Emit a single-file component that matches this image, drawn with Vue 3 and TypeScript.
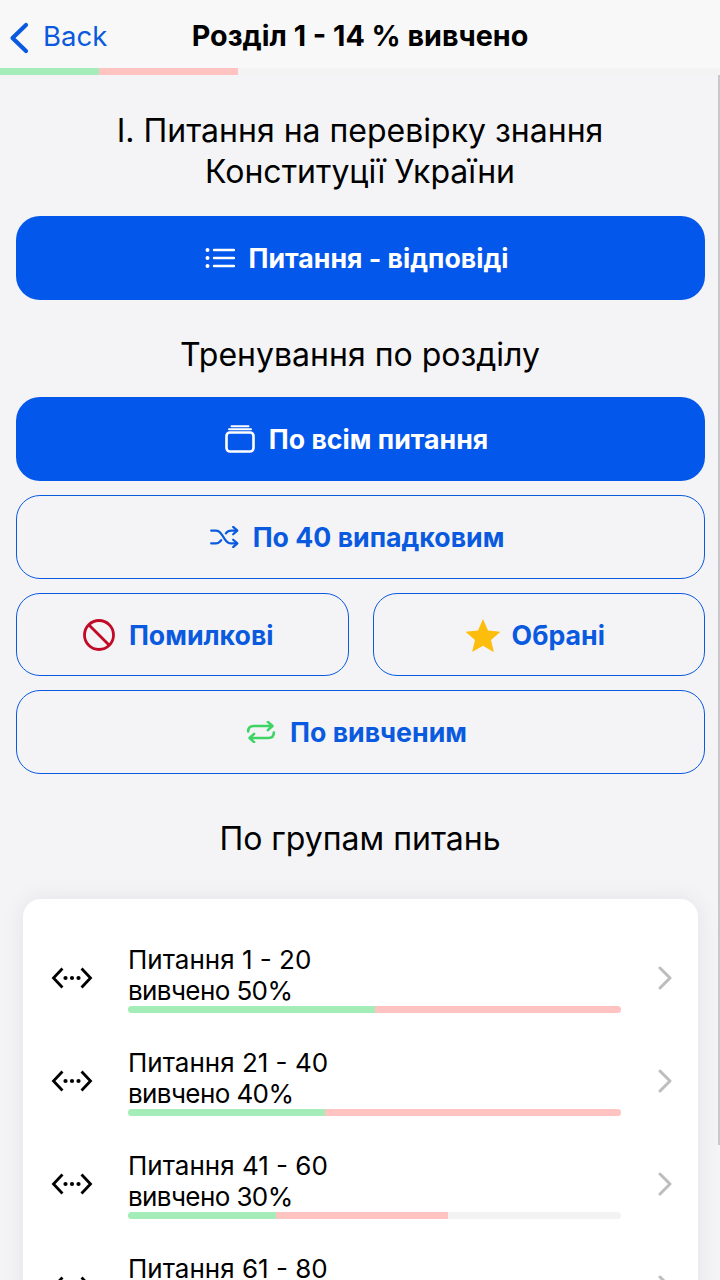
<script setup lang="ts">
interface Group { title: string; label: string; green: number; pink: number }
const groups: Group[] = [
  { title: 'Питання 1 - 20', label: 'вивчено 50%', green: 50, pink: 50 },
  { title: 'Питання 21 - 40', label: 'вивчено 40%', green: 40, pink: 60 },
  { title: 'Питання 41 - 60', label: 'вивчено 30%', green: 30, pink: 35 },
  { title: 'Питання 61 - 80', label: 'вивчено 20%', green: 20, pink: 30 },
]
</script>

<template>
  <div class="screen">
    <header class="nav">
      <div class="back">
        <svg class="back-icon" width="26" height="34" viewBox="0 0 26 34" fill="none"><path d="M20 4 L6.500 17 L20 30" stroke="#0a5ae0" stroke-width="4.200" stroke-linecap="round" stroke-linejoin="round" /></svg>
        <span>Back</span>
      </div>
      <div class="nav-title">Розділ 1 - 14 % вивчено</div>
    </header>
    <div class="top-progress">
      <div class="seg green top-g"></div>
      <div class="seg pink top-p"></div>
    </div>
    <main class="content">
      <h1 class="heading first">І. Питання на перевірку знання<br />Конституції України</h1>
      <button class="btn solid q-btn">
        <svg width="30" height="24" viewBox="0 0 30 24" fill="none" stroke="#fff" stroke-width="2.400" stroke-linecap="round"><path d="M9 4H29M9 12H29M9 20H29" /><circle cx="2.500" cy="4" r="2" fill="#fff" stroke="none" /><circle cx="2.500" cy="12" r="2" fill="#fff" stroke="none" /><circle cx="2.500" cy="20" r="2" fill="#fff" stroke="none" /></svg>
        <span>Питання - відповіді</span>
      </button>
      <h2 class="heading train">Тренування по розділу</h2>
      <div class="stack">
        <button class="btn solid">
          <svg width="30" height="28" viewBox="0 0 30 28" fill="none" stroke="#fff" stroke-linecap="round"><rect x="1.500" y="7.500" width="27" height="19" rx="3.500" stroke-width="2.600" /><path d="M4 4.200H26" stroke-width="2" /><path d="M6.500 1.200H23.500" stroke-width="2" /></svg>
          <span>По всім питання</span>
        </button>
        <button class="btn outline">
          <svg width="30" height="22" viewBox="0 0 32 24" fill="none" stroke="#0a5ae0" stroke-width="2.400" stroke-linecap="round" stroke-linejoin="round"><path d="M2 5h5c3.500 0 5 1.500 7 5l3 4.500c2 3 3.500 4.500 7 4.500h6" /><path d="M2 19h5c3 0 4.500-1.200 6-3.500M18 8c1.500-2 3-3 6-3h6" /><path d="M26 1l4.500 4L26 9M26 15l4.500 4-4.500 4" /></svg>
          <span>По 40 випадковим</span>
        </button>
        <div class="pair">
          <button class="btn outline">
            <svg width="32" height="32" viewBox="0 0 32 32" fill="none" stroke="#c00a26" stroke-width="2.800"><circle cx="16" cy="16" r="14.500" /><path d="M6 6L26 26" /></svg>
            <span>Помилкові</span>
          </button>
          <button class="btn outline star-btn">
            <svg width="36" height="34" viewBox="0 0 36 34"><path d="M18 1l5 11.500 12.500 1.200-9.500 8.300 2.900 12.200L18 27.800 7.100 34 10 21.900.5 13.700 13 12.500z" fill="#fdbd0c" /></svg>
            <span>Обрані</span>
          </button>
        </div>
        <button class="btn outline">
          <svg width="30" height="22" viewBox="0 0 32 24" fill="none" stroke="#3dd463" stroke-width="2.800" stroke-linecap="round" stroke-linejoin="round"><path d="M2 11.500C2 7.500 4.500 5.500 8 5.500h20M23.500 1l5 4.500-5 4.500" /><path d="M30 12.500c0 4-2.500 6-6 6H4M8.500 14l-5 4.500 5 4.500" /></svg>
          <span>По вивченим</span>
        </button>
      </div>
      <h2 class="heading groups-title">По групам питань</h2>
      <section class="card">
        <div v-for="g in groups" :key="g.title" class="row">
          <svg class="dots" width="42" height="24" viewBox="0 0 42 24" fill="none" stroke="#000" stroke-width="2.800" stroke-linecap="square"><path d="M10.500 3.500L2.500 12l8 8.500M31.500 3.500l8 8.500-8 8.500" /><circle cx="14.500" cy="12" r="2.100" fill="#000" stroke="none" /><circle cx="21" cy="12" r="2.100" fill="#000" stroke="none" /><circle cx="27.500" cy="12" r="2.100" fill="#000" stroke="none" /></svg>
          <div class="info">
            <div class="line">{{ g.title }}</div>
            <div class="line label">{{ g.label }}</div>
            <div class="bar">
              <div class="seg green" :style="{ width: g.green + '%' }"></div>
              <div class="seg pink" :style="{ width: g.pink + '%' }"></div>
            </div>
          </div>
          <svg class="chev" width="16" height="24" viewBox="0 0 16 24" fill="none"><path d="M3 2L13 12 3 22" stroke="#bdbdbd" stroke-width="3" stroke-linecap="round" stroke-linejoin="round" /></svg>
        </div>
      </section>
    </main>
    <div class="scrollbar"></div>
  </div>
</template>

<style scoped>
.screen {
  position: relative;
  width: 720px;
  height: 1280px;
  overflow: hidden;
  background: #f4f4f7;
  font-family: Inter, "Liberation Sans", sans-serif;
  color: #000;
}
.nav {
  position: relative;
  height: 68px;
  padding-top: 2px;
  box-sizing: border-box;
  background: #f8f8f8;
  display: flex;
  align-items: center;
  justify-content: center;
}
.back {
  position: absolute;
  left: 6px;
  top: 19px;
  display: flex;
  align-items: center;
  gap: 11px;
  color: #0a5ae0;
  font-size: 27.500px;
}
.back-icon { position: relative; top: 2px; }
.nav-title {
  font-size: 28.700px;
  font-weight: 700;
}
.top-progress {
  display: flex;
  height: 7px;
  background: #f3f3f3;
}
.top-g { width: 99px; }
.top-p { width: 139px; }
.seg { height: 100%; }
.green { background: #a5edb8; }
.pink { background: #ffc4c2; }
.content {
  display: flex;
  flex-direction: column;
}
.heading {
  margin: 0;
  text-align: center;
  font-size: 32px;
  font-weight: 400;
  line-height: 41px;
}
.first { margin-top: 35px; }
.btn {
  height: 83.300px;
  border-radius: 24px;
  display: flex;
  align-items: center;
  justify-content: center;
  gap: 14px;
  font-family: inherit;
  font-size: 26.700px;
  font-weight: 700;
  padding: 0 8px 0 0;
}
.solid {
  height: 84px;
  background: #0457eb;
  color: #fff;
  border: none;
}
.outline {
  background: transparent;
  color: #0a5ae0;
  border: 1.500px solid #0a5ae0;
}
.star-btn { gap: 11px; }
.q-btn { margin: 24px 15px 0 16px; }
.train { margin-top: 34px; }
.stack {
  margin: 22px 15px 0 16px;
  display: flex;
  flex-direction: column;
  gap: 14.300px;
}
.pair {
  display: grid;
  grid-template-columns: 1fr 1fr;
  gap: 24px;
}
.groups-title { margin-top: 44px; }
.card {
  margin: 40px 22px 0 23px;
  background: #fff;
  border-radius: 18px;
  padding: 28px 0 0;
  box-shadow: 0 0 24px rgba(0, 0, 0, 0.07);
}
.row {
  display: flex;
  align-items: center;
  height: 103px;
  padding-left: 28px;
}
.dots { flex: none; }
.info {
  margin-left: 35px;
  width: 493px;
  flex: none;
}
.line {
  font-size: 26px;
  line-height: 31px;
}
.label { letter-spacing: -0.600px; }
.bar {
  display: flex;
  height: 7px;
  background: #f3f3f3;
  border-radius: 4px;
  overflow: hidden;
}
.chev { margin-left: 36px; flex: none; }
.scrollbar {
  position: absolute;
  right: 0;
  top: 75px;
  width: 2px;
  height: 1070px;
  background: #c9c9cc;
}
</style>
